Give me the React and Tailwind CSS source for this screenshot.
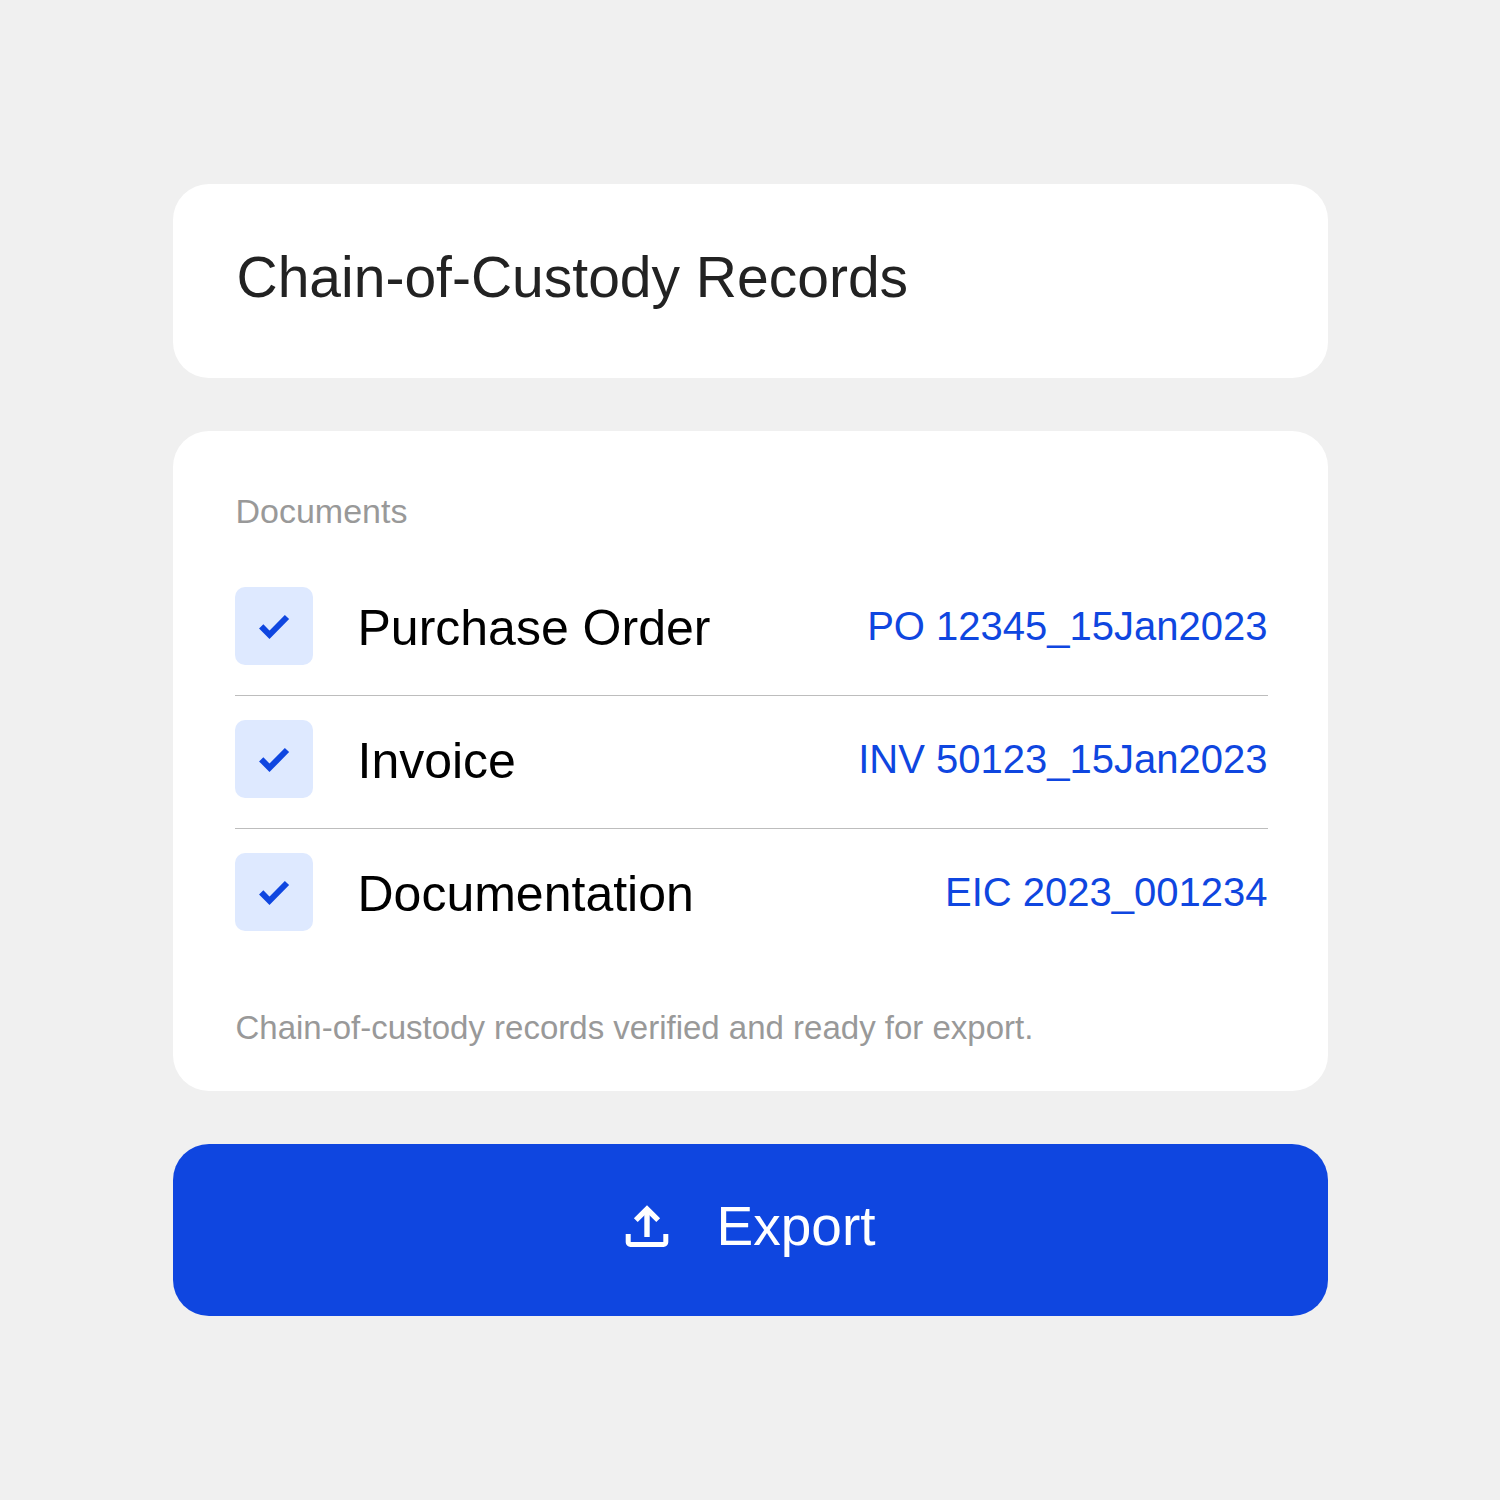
import React, { useState } from 'react';

const documents = [
  { id: 'po', name: 'Purchase Order', file: 'PO 12345_15Jan2023' },
  { id: 'inv', name: 'Invoice', file: 'INV 50123_15Jan2023' },
  { id: 'doc', name: 'Documentation', file: 'EIC 2023_001234' },
];

function UploadIcon() {
  return (
    <svg className="size-11" viewBox="0 0 44 44" fill="none" stroke="currentColor" strokeWidth="5" aria-hidden="true">
      <path strokeWidth="5.4" d="M22 33V5" />
      <path strokeWidth="5.4" d="M10.8 16.2 22 5l11.2 11.2" />
      <path d="M3.2 30v8.2a2.3 2.3 0 0 0 2.3 2.3h33a2.3 2.3 0 0 0 2.3-2.3v-8.2" />
    </svg>
  );
}

function DocumentRow({ doc, checked, onToggle }) {
  return (
    <li className="flex items-center justify-between border-b border-[#bdbdbd] pt-6 pb-[30px] first:pt-0 last:border-b-0 last:pb-0">
      <div className="flex items-center">
        <span className="relative block size-[78px]">
          <input
            id={doc.id}
            type="checkbox"
            checked={checked}
            onChange={onToggle}
            className="block size-full cursor-pointer appearance-none rounded-[10px] bg-[#dee9ff]"
          />
          {checked && (
            <svg
              className="pointer-events-none absolute inset-0 size-full text-[#0f46e0]"
              viewBox="0 0 78 78"
              fill="none"
              stroke="currentColor"
              strokeWidth="6"
              aria-hidden="true"
            >
              <path d="M26.2 39.3 34.5 47.8 52 30" />
            </svg>
          )}
        </span>
        <label htmlFor={doc.id} className="cursor-pointer pt-1 pl-[45px] text-[50px] leading-[60px] text-black">
          {doc.name}
        </label>
      </div>
      <a href={`#${doc.id}`} className="text-[40px] leading-[60px] text-[#0f46e0]">
        {doc.file}
      </a>
    </li>
  );
}

export default function App() {
  const [selected, setSelected] = useState(documents.map(d => d.id));

  const toggle = id => {
    setSelected(prev => (prev.includes(id) ? prev.filter(x => x !== id) : [...prev, id]));
  };

  return (
    <main className="flex min-h-screen flex-col items-center justify-center bg-[#f0f0f0] font-['Liberation_Sans',Arial,sans-serif]">
      <div className="flex w-[77%] flex-col gap-[53px]">
        <header className="rounded-[36px] bg-white px-16 pt-[59px] pb-[67px]">
          <h1 className="text-[57px] leading-[68px] text-[#222222]">Chain-of-Custody Records</h1>
        </header>

        <section className="rounded-[36px] bg-white pt-[58px] pr-[60px] pb-[41px] pl-[62px]">
          <h2 className="pl-px text-[34px] leading-[44px] text-[#999999]">Documents</h2>
          <ul className="mt-[54px]">
            {documents.map(doc => (
              <DocumentRow
                key={doc.id}
                doc={doc}
                checked={selected.includes(doc.id)}
                onToggle={() => toggle(doc.id)}
              />
            ))}
          </ul>
          <p className="mt-[75px] pl-px text-[33px] leading-[44px] text-[#999999]">
            Chain-of-custody records verified and ready for export.
          </p>
        </section>

        <button
          type="button"
          className="flex cursor-pointer items-center justify-center gap-12 rounded-[36px] bg-[#0f46e0] pt-12 pb-14 text-[55px] leading-[68px] text-white"
        >
          <UploadIcon />
          Export
        </button>
      </div>
    </main>
  );
}
